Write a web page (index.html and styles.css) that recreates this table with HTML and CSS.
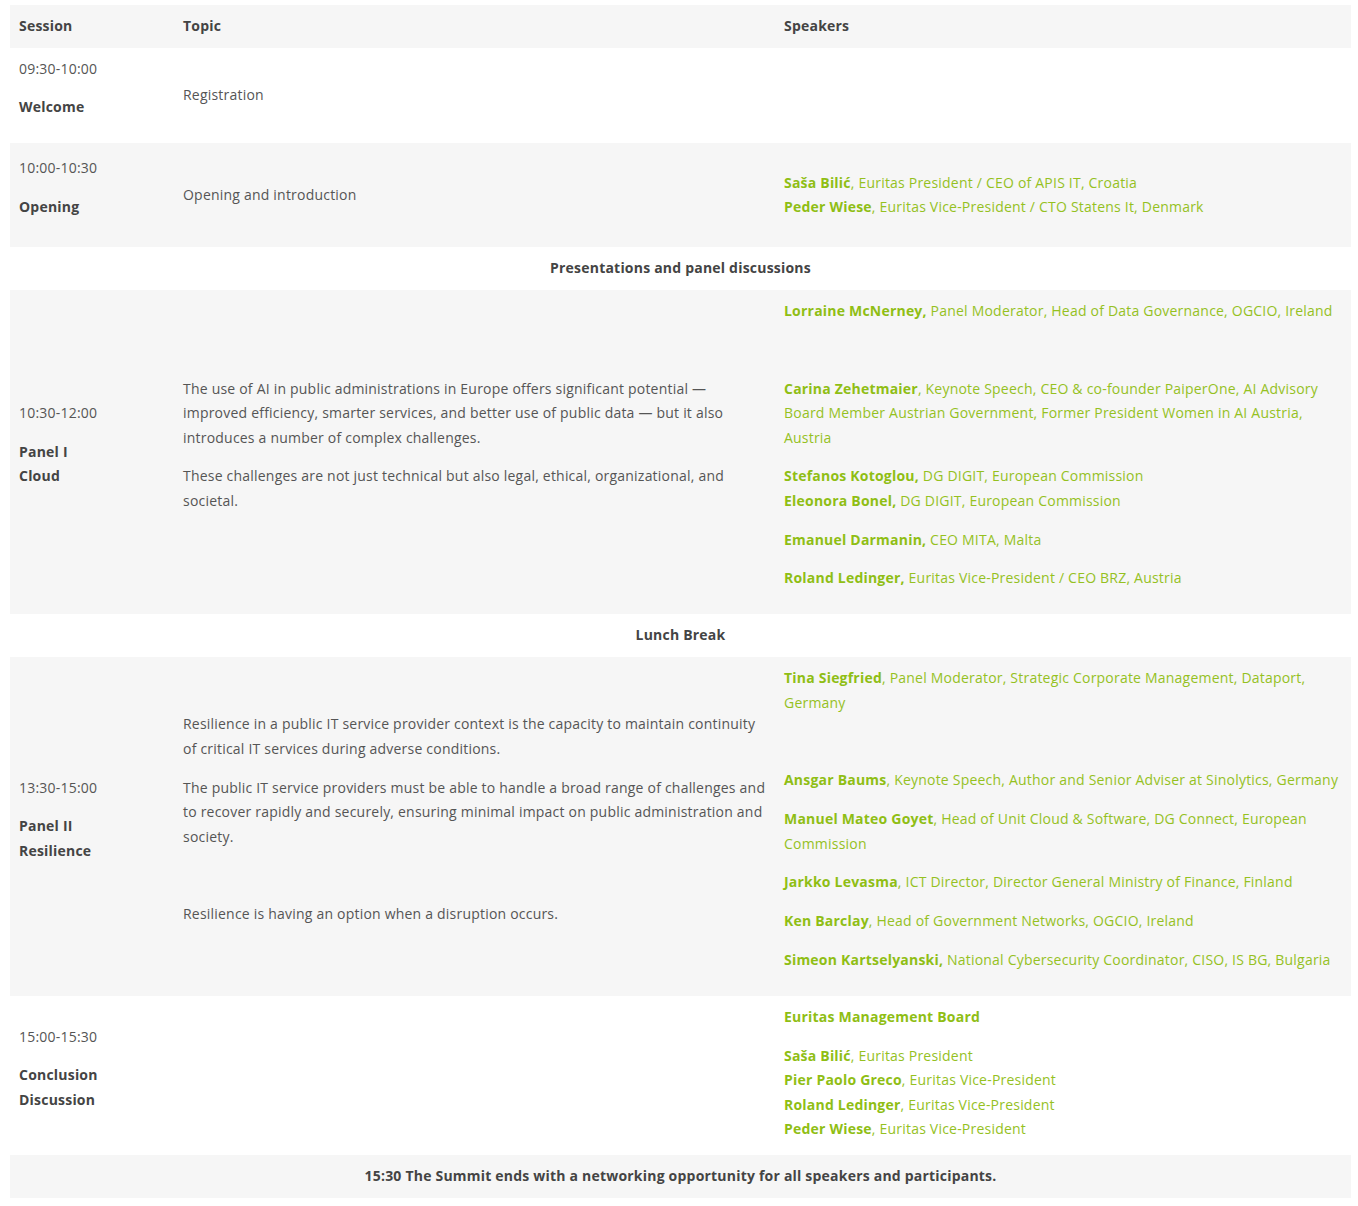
FILE: index.html
```html
<!DOCTYPE html>
<html lang="en">
<head>
<meta charset="utf-8">
<title>Agenda</title>
<link rel="stylesheet" href="styles.css">
</head>
<body>
<div class="page">
<table class="agenda">
  <colgroup>
    <col class="c-session">
    <col class="c-topic">
    <col class="c-speakers">
  </colgroup>
  <thead>
    <tr class="head">
      <th>Session</th>
      <th>Topic</th>
      <th>Speakers</th>
    </tr>
  </thead>
  <tbody>
    <tr>
      <td><p>09:30-10:00</p><p><strong>Welcome</strong></p></td>
      <td>Registration</td>
      <td></td>
    </tr>
    <tr class="row-opening">
      <td><p>10:00-10:30</p><p><strong>Opening</strong></p></td>
      <td>Opening and introduction</td>
      <td class="speakers"><p class="last"><b>Saša Bilić</b>, Euritas President / CEO of APIS IT, Croatia<br><b>Peder Wiese</b>, Euritas Vice-President / CTO Statens It, Denmark</p></td>
    </tr>
    <tr class="section">
      <td colspan="3">Presentations and panel discussions</td>
    </tr>
    <tr>
      <td><p>10:30-12:00</p><p><strong>Panel I<br>Cloud</strong></p></td>
      <td>
        <p>The use of AI in public administrations in Europe offers significant potential — improved efficiency, smarter services, and better use of public data — but it also introduces a number of complex challenges.</p>
        <p>These challenges are not just technical but also legal, ethical, organizational, and societal.</p>
      </td>
      <td class="speakers">
        <p><b>Lorraine McNerney,</b> Panel Moderator, Head of Data Governance, OGCIO, Ireland</p>
        <p>&nbsp;</p>
        <p><b>Carina Zehetmaier</b>, Keynote Speech, CEO &amp; co-founder PaiperOne, AI Advisory Board Member Austrian Government, Former President Women in AI Austria, Austria</p>
        <p><b>Stefanos Kotoglou,</b> DG DIGIT, European Commission<br><b>Eleonora Bonel,</b> DG DIGIT, European Commission</p>
        <p><b>Emanuel Darmanin,</b> CEO MITA, Malta</p>
        <p><b>Roland Ledinger,</b> Euritas Vice-President / CEO BRZ, Austria</p>
      </td>
    </tr>
    <tr class="section">
      <td colspan="3">Lunch Break</td>
    </tr>
    <tr class="row-panel2">
      <td><p>13:30-15:00</p><p><strong>Panel II<br>Resilience</strong></p></td>
      <td>
        <p>Resilience in a public IT service provider context is the capacity to maintain continuity of critical IT services during adverse conditions.</p>
        <p>The public IT service providers must be able to handle a broad range of challenges and to recover rapidly and securely, ensuring minimal impact on public administration and society.</p>
        <p>&nbsp;</p>
        <p>Resilience is having an option when a disruption occurs.</p>
      </td>
      <td class="speakers">
        <p><b>Tina Siegfried</b>, Panel Moderator, Strategic Corporate Management, Dataport, Germany</p>
        <p>&nbsp;</p>
        <p><b>Ansgar Baums</b>, Keynote Speech, Author and Senior Adviser at Sinolytics, Germany</p>
        <p><b>Manuel Mateo Goyet</b>, Head of Unit Cloud &amp; Software, DG Connect, European Commission</p>
        <p><b>Jarkko Levasma</b>, ICT Director, Director General Ministry of Finance, Finland</p>
        <p><b>Ken Barclay</b>, Head of Government Networks, OGCIO, Ireland</p>
        <p><b>Simeon Kartselyanski,</b> National Cybersecurity Coordinator, CISO, IS BG, Bulgaria</p>
      </td>
    </tr>
    <tr class="row-conclusion">
      <td><p>15:00-15:30</p><p><strong>Conclusion<br>Discussion</strong></p></td>
      <td></td>
      <td class="speakers top">
        <p><b>Euritas Management Board</b></p>
        <p class="last"><b>Saša Bilić</b>, Euritas President<br><b>Pier Paolo Greco</b>, Euritas Vice-President<br><b>Roland Ledinger</b>, Euritas Vice-President<br><b>Peder Wiese</b>, Euritas Vice-President</p>
      </td>
    </tr>
    <tr class="section final">
      <td colspan="3">15:30 The Summit ends with a networking opportunity for all speakers and participants.</td>
    </tr>
  </tbody>
</table>
</div>
</body>
</html>
```

FILE: styles.css
```css
html, body {
  margin: 0;
  padding: 0;
  background: #ffffff;
}

body {
  font-family: "Open Sans", "Liberation Sans", sans-serif;
  font-size: 14px;
  line-height: 24.5px;
  letter-spacing: 0.21px;
  color: #555555;
}

.page {
  padding: 5px 7px 9px 10px;
}

.agenda {
  width: 1341px;
  border-collapse: collapse;
  border-spacing: 0;
  table-layout: fixed;
}

.c-session { width: 164px; }
.c-topic { width: 601px; }
.c-speakers { width: 576px; }

.agenda th,
.agenda td {
  padding: 9px 9px;
  text-align: left;
  vertical-align: middle;
}

.agenda th {
  font-weight: 700;
  color: #444444;
}

.agenda p {
  margin: 0 0 14.25px;
}

.agenda p.last {
  margin-bottom: 0;
}

.agenda strong {
  font-weight: 700;
  color: #444444;
}

.head,
.agenda tbody tr:nth-child(even) {
  background: #f6f6f6;
}

.speakers {
  color: #95c11f;
}

.speakers b {
  font-weight: 700;
  color: #8fbe14;
}

.speakers.top {
  vertical-align: top;
}

.row-opening {
  height: 104px;
}

.row-panel2 {
  height: 339px;
}

.row-conclusion {
  height: 159px;
}

.section {
  height: 43px;
}

.section.final {
  height: 42px;
}

.agenda tr.section td {
  text-align: center;
  font-weight: 700;
  color: #444444;
}
```
